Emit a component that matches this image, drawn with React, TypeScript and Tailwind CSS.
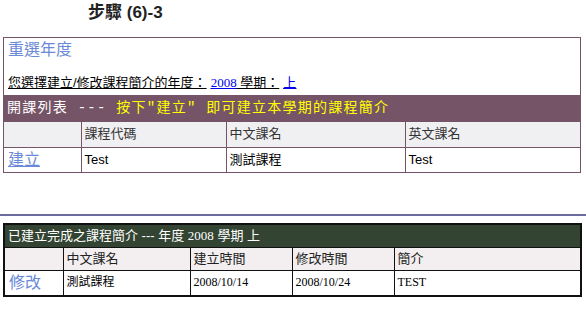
import React from "react";

const sans = { fontFamily: '"Liberation Sans", "Noto Sans CJK TC", sans-serif' };
const serif = { fontFamily: '"Liberation Serif", "Noto Sans CJK TC", serif' };
const mono = { fontFamily: '"Liberation Mono", "Noto Sans CJK TC", monospace' };

export default function App() {
  return (
    <div className="w-[586px] h-[330px] bg-white text-black" style={sans}>
      {/* 標題 */}
      <div className="h-[37px] pl-[88px] pt-[3px] text-[17px] font-bold leading-[20px] text-[#222]">
        步驟 (6)-3
      </div>

      {/* 開課列表 */}
      <div className="ml-[3px] w-[578px] border border-[#765467]">
        <div className="px-[4px] pt-[2px] h-[57px]">
          <div className="text-[16px] leading-[20px] text-[#6a8ad8]">重選年度</div>
          <div className="mt-[15px] text-[13px] leading-[15px] underline">
            您選擇建立/修改課程簡介的年度：<a className="ml-[4px] text-[#0000ee] underline" style={serif}>2008</a> 學期：<a className="ml-[4px] text-[#0000ee] underline">上</a>
          </div>
        </div>
        <div
          className="-mx-px h-[27px] bg-[#765467] pl-[4px] text-[14px] leading-[27px] tracking-[1.25px] text-white whitespace-pre"
          style={mono}
        >
          開課列表 --- <span className="text-[#ffff00]">按下"建立" 即可建立本學期的課程簡介</span>
        </div>
        <table className="w-full table-fixed border-collapse text-[13px]">
          <colgroup>
            <col className="w-[77px]" />
            <col className="w-[145px]" />
            <col className="w-[179px]" />
            <col />
          </colgroup>
          <tbody>
            <tr className="h-[25px] bg-[#f0eff2] text-[#333]">
              <td className="border-r border-[#765467]"></td>
              <td className="border-r border-[#765467] px-[3px] align-top pt-[2px]">課程代碼</td>
              <td className="border-r border-[#765467] px-[3px] align-top pt-[2px]">中文課名</td>
              <td className="px-[3px] align-top pt-[2px]">英文課名</td>
            </tr>
            <tr className="h-[25px] border-t border-[#765467]">
              <td className="border-r border-[#765467] px-[4px] text-[16px] text-[#6a8ad8] underline">建立</td>
              <td className="border-r border-[#765467] px-[3px]">Test</td>
              <td className="border-r border-[#765467] px-[3px]">測試課程</td>
              <td className="px-[3px]">Test</td>
            </tr>
          </tbody>
        </table>
      </div>

      <div className="mt-[41px] h-[2px] w-[586px] bg-[#6b6b9e]"></div>

      {/* 已建立完成之課程簡介 */}
      <table className="ml-[3px] mt-[7px] w-[579px] table-fixed border-collapse border-2 border-[#111] text-[12px]">
        <colgroup>
          <col className="w-[59px]" />
          <col className="w-[127px]" />
          <col className="w-[102px]" />
          <col className="w-[102px]" />
          <col />
        </colgroup>
        <tbody>
          <tr className="h-[23px] bg-[#334433] text-white">
            <td colSpan={5} className="px-[3px] text-[13px] leading-[20px]">
              已建立完成之課程簡介 --- 年度 <span style={serif}>2008</span> 學期 上
            </td>
          </tr>
          <tr className="h-[23px] bg-[#f3eff0] text-[13px] text-[#222]">
            <td className="border border-[#111]"></td>
            <td className="border border-[#111] px-[3px]">中文課名</td>
            <td className="border border-[#111] px-[3px]">建立時間</td>
            <td className="border border-[#111] px-[3px]">修改時間</td>
            <td className="border border-[#111] px-[3px]">簡介</td>
          </tr>
          <tr className="h-[26px]" style={serif}>
            <td className="border border-[#111] px-[4px] text-[16px] text-[#6a8ad8]" style={sans}>修改</td>
            <td className="border border-[#111] px-[3px] align-top pt-[2px]" style={sans}>測試課程</td>
            <td className="border border-[#111] px-[3px] align-top pt-[2px]">2008/10/14</td>
            <td className="border border-[#111] px-[3px] align-top pt-[2px]">2008/10/24</td>
            <td className="border border-[#111] px-[3px] align-top pt-[2px]">TEST</td>
          </tr>
        </tbody>
      </table>
    </div>
  );
}
